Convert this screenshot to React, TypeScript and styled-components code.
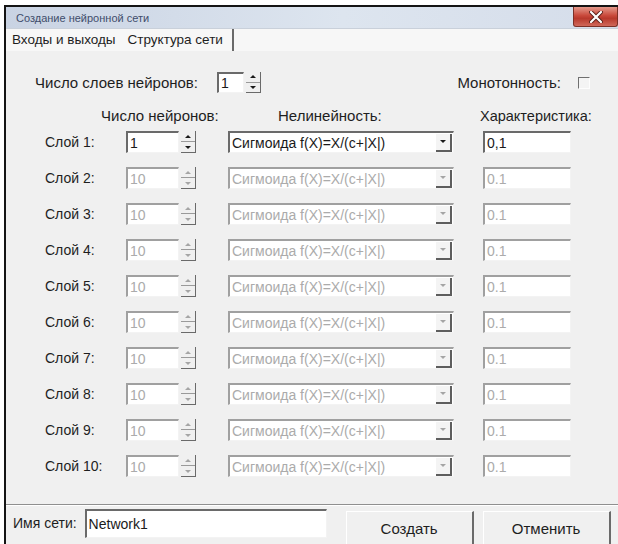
import React from "react";
import styled, { createGlobalStyle } from "styled-components";

const GlobalStyle = createGlobalStyle`
  html, body {
    margin: 0;
    padding: 0;
    background: #ffffff;
    overflow: hidden;
  }
  body {
    font-family: "Liberation Sans", Arial, sans-serif;
  }
`;

const Window = styled.div`
  margin: 5px 0 0 4px;
  width: 614px;
  height: 545px;
  border-top: 2px solid #141414;
  border-left: 2px solid #141414;
  background: #f0f0f0;
  display: flex;
  flex-direction: column;
  box-sizing: border-box;
`;

const TitleBar = styled.div`
  height: 21px;
  display: flex;
  align-items: center;
  justify-content: space-between;
  padding-left: 10px;
  background: linear-gradient(to right, #c9d3e3, #dde5ef 55%, #d5ddea);
  border-bottom: 1px solid #c9d0da;
`;

const Title = styled.span`
  font-size: 11px;
  color: #3f4d6b;
`;

const CloseButton = styled.div`
  width: 45px;
  height: 20px;
  margin-top: -1px;
  box-sizing: border-box;
  border: 1px solid #7c3027;
  border-top: none;
  border-radius: 0 0 3px 3px;
  background: linear-gradient(#e49a8c, #c9493b 45%, #b8392c 60%, #d0685a);
  display: flex;
  align-items: center;
  justify-content: center;
`;

const TabStrip = styled.div`
  height: 22px;
  display: flex;
  align-items: center;
  padding-left: 6px;
  background: #f7f7f7;
`;

const Tab = styled.div<{ $active?: boolean }>`
  font-size: 13.5px;
  color: #1e1e1e;
  height: 22px;
  line-height: 22px;
  padding-right: ${(p) => (p.$active ? "9px" : "0")};
  border-right: ${(p) => (p.$active ? "2px solid #6a6a6a" : "none")};
  margin-right: ${(p) => (p.$active ? "0" : "12px")};
`;

const Page = styled.div`
  flex: 1;
  display: flex;
  flex-direction: column;
  padding: 21px 0 0 0;
`;

const TopRow = styled.div`
  display: flex;
  align-items: center;
  height: 21px;
  padding-left: 29px;
  padding-right: 28px;
`;

const Label = styled.span<{ $size?: number }>`
  font-size: ${(p) => p.$size ?? 15}px;
  color: #1e1e1e;
  white-space: nowrap;
`;

const Spacer = styled.div`
  flex: 1;
`;

const CheckBox = styled.div`
  width: 12px;
  height: 12px;
  margin-left: 17px;
  box-sizing: border-box;
  border-top: 1px solid #6f6f6f;
  border-left: 1px solid #6f6f6f;
  border-right: 1px solid #fdfdfd;
  border-bottom: 1px solid #fdfdfd;
  background: #f4f4f4;
`;

const Grid = styled.div`
  display: grid;
  grid-template-columns: 81px 102px 255px 88px;
  grid-auto-rows: 22px;
  row-gap: 14px;
  align-items: center;
  padding-left: 39px;
`;

const HeaderRow = styled.div`
  display: grid;
  grid-template-columns: 177px 202px auto;
  height: 16px;
  align-items: center;
  margin: 14px 0 8px 0;
  padding-left: 95px;
`;

const SpinField = styled.div<{ $width: number }>`
  display: flex;
  width: ${(p) => p.$width}px;
  height: 100%;
`;

const Field = styled.div<{ $disabled?: boolean; $width?: number }>`
  width: ${(p) => (p.$width ? `${p.$width}px` : "auto")};
  flex: ${(p) => (p.$width ? "none" : "1")};
  height: 100%;
  box-sizing: border-box;
  background: #ffffff;
  border-top: 2px solid ${(p) => (p.$disabled ? "#a0a0a0" : "#6a6a6a")};
  border-left: 2px solid ${(p) => (p.$disabled ? "#a0a0a0" : "#6a6a6a")};
  border-right: 1px solid #f3f3f3;
  border-bottom: 1px solid #f3f3f3;
  display: flex;
  align-items: center;
  padding-left: 2px;
  font-size: 14px;
  color: ${(p) => (p.$disabled ? "#ababab" : "#1a1a1a")};
  white-space: nowrap;
  overflow: hidden;
`;

const Spinner = styled.div`
  width: 15px;
  margin-left: 2px;
  display: flex;
  flex-direction: column;
  box-sizing: border-box;
  border-right: 1px solid #6a6a6a;
  border-bottom: 1px solid #6a6a6a;
`;

const SpinHalf = styled.div<{ $down?: boolean }>`
  flex: 1;
  display: flex;
  align-items: center;
  justify-content: center;
  border-top: ${(p) => (p.$down ? "1px solid #9a9a9a" : "none")};
`;

const Arrow = styled.div<{ $down?: boolean; $disabled?: boolean }>`
  width: 0;
  height: 0;
  border-left: 3px solid transparent;
  border-right: 3px solid transparent;
  ${(p) =>
    p.$down
      ? `border-top: 3px solid ${p.$disabled ? "#a5a5a5" : "#1a1a1a"};`
      : `border-bottom: 3px solid ${p.$disabled ? "#a5a5a5" : "#1a1a1a"};`}
`;

const Combo = styled(Field)`
  width: 226px;
  flex: none;
  justify-content: space-between;
  padding-right: 1px;
`;

const DropButton = styled.div`
  width: 16px;
  height: 18px;
  box-sizing: border-box;
  border-right: 2px solid #5e5e5e;
  border-bottom: 2px solid #5e5e5e;
  display: flex;
  align-items: center;
  justify-content: center;
  background: #f4f4f4;
`;

const Footer = styled.div`
  margin-top: 27px;
  border-top: 1px solid #8f8f8f;
  box-shadow: inset 0 1px 0 #ffffff;
  display: flex;
  align-items: flex-start;
  padding: 4px 0 0 7px;
  height: 40px;
`;

const FooterLabel = styled.span`
  font-size: 14px;
  color: #1e1e1e;
  line-height: 29px;
  margin-right: 8px;
`;

const NameField = styled(Field)`
  height: 29px;
`;

const Button = styled.div<{ $gap: number }>`
  width: 128px;
  height: 36px;
  margin-top: 2px;
  margin-left: ${(p) => p.$gap}px;
  box-sizing: border-box;
  border-top: 1px solid #ffffff;
  border-left: 1px solid #ffffff;
  border-right: 2px solid #6a6a6a;
  border-bottom: 2px solid #6a6a6a;
  background: #f0f0f0;
  display: flex;
  align-items: center;
  justify-content: center;
  font-size: 15px;
  color: #1e1e1e;
`;

type Layer = { n: number; neurons: string; value: string; enabled: boolean };

const layers: Layer[] = Array.from({ length: 10 }, (_, i) => ({
  n: i + 1,
  neurons: i === 0 ? "1" : "10",
  value: i === 0 ? "0,1" : "0.1",
  enabled: i === 0,
}));

const SpinButtons = ({ disabled }: { disabled?: boolean }) => (
  <Spinner>
    <SpinHalf>
      <Arrow $disabled={disabled} />
    </SpinHalf>
    <SpinHalf $down>
      <Arrow $down $disabled={disabled} />
    </SpinHalf>
  </Spinner>
);

const App = () => {
  return (
    <>
      <GlobalStyle />
      <Window>
        <TitleBar>
          <Title>Создание нейронной сети</Title>
          <CloseButton>
            <svg width="14" height="12" viewBox="0 0 14 12">
              <path
                d="M2 1 L12 11 M12 1 L2 11"
                stroke="#5a2019"
                strokeWidth="4"
                strokeLinecap="round"
              />
              <path
                d="M2 1 L12 11 M12 1 L2 11"
                stroke="#ffffff"
                strokeWidth="2.2"
                strokeLinecap="round"
              />
            </svg>
          </CloseButton>
        </TitleBar>
        <TabStrip>
          <Tab>Входы и выходы</Tab>
          <Tab $active>Структура сети</Tab>
        </TabStrip>
        <Page>
          <TopRow>
            <Label>Число слоев нейронов:</Label>
            <SpinField $width={46} style={{ marginLeft: 19 }}>
              <Field $width={27}>1</Field>
              <SpinButtons />
            </SpinField>
            <Spacer />
            <Label>Монотонность:</Label>
            <CheckBox />
          </TopRow>
          <HeaderRow>
            <Label>Число нейронов:</Label>
            <Label>Нелинейность:</Label>
            <Label $size={14.5}>Характеристика:</Label>
          </HeaderRow>
          <Grid>
            {layers.map((l) => (
              <React.Fragment key={l.n}>
                <Label $size={14}>Слой {l.n}:</Label>
                <SpinField $width={70}>
                  <Field $disabled={!l.enabled}>{l.neurons}</Field>
                  <SpinButtons disabled={!l.enabled} />
                </SpinField>
                <Combo $disabled={!l.enabled}>
                  <span>Сигмоида f(X)=X/(c+|X|)</span>
                  <DropButton>
                    <Arrow $down $disabled={!l.enabled} />
                  </DropButton>
                </Combo>
                <Field $disabled={!l.enabled}>{l.value}</Field>
              </React.Fragment>
            ))}
          </Grid>
          <Footer>
            <FooterLabel>Имя сети:</FooterLabel>
            <NameField $width={242}>Network1</NameField>
            <Button $gap={19}>Создать</Button>
            <Button $gap={9}>Отменить</Button>
          </Footer>
        </Page>
      </Window>
    </>
  );
};

export default App;
